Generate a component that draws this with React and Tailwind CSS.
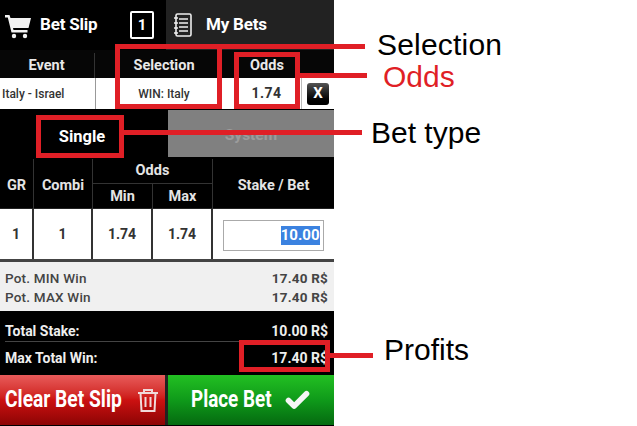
import React from "react";
import { Check } from "lucide-react";

const Box = ({ cls }) => <div className={"absolute border-[5px] border-[#e01f26] " + cls} />;
const Line = ({ cls }) => <div className={"absolute h-[5px] bg-[#e01f26] " + cls} />;

export default function App() {
  return (
    <div className="relative w-[637px] h-[426px] overflow-hidden bg-white font-['Roboto',sans-serif]">
      <div className="w-[334px] h-[426px] flex flex-col bg-black">
        <div className="h-[50px] flex shrink-0">
          <div className="w-[166px] flex items-center bg-black text-white">
            <svg width="28" height="28" viewBox="0 0 28 28" className="ml-[4px]" fill="#f2f2f2">
              <path d="M1 4h4.500l1 3H27l-2.500 10H9l.5 2h14v2.500H7.500L3.800 6.500H1z" />
              <circle cx="10" cy="25" r="2.200" />
              <circle cx="21" cy="25" r="2.200" />
            </svg>
            <span className="ml-[8px] w-[57px] text-[17px] font-bold whitespace-nowrap tracking-[-0.2px]">Bet Slip</span>
            <span className="ml-[33px] w-[24px] h-[28px] flex items-center justify-center border-2 border-white rounded-[2px] text-[15px] font-bold">1</span>
          </div>
          <div className="flex-1 flex items-center bg-[#222222] text-white">
            <svg width="22" height="26" viewBox="0 0 22 26" className="ml-[6px]" fill="none" stroke="#eeeeee" strokeWidth="1.600">
              <rect x="4" y="2" width="15" height="22" rx="1.500" />
              <path d="M7 7h9M7 11h9M7 15h9M7 19h9M2 6h4M2 11h4M2 16h4M2 21h4" />
            </svg>
            <span className="ml-[12px] text-[17px] font-bold whitespace-nowrap tracking-[-0.2px]">My Bets</span>
          </div>
        </div>

        <div className="h-[28px] pt-[3px] flex shrink-0 text-[#e8e8e8] text-[14.5px] font-bold items-center bg-[#060606]">
          <div className="w-[93px] text-center">Event</div>
          <div className="w-[1px] h-full bg-[#333333] mx-[1px]" />
          <div className="w-[136px] text-center">Selection</div>
          <div className="w-[70px] text-center">Odds</div>
        </div>

        <div className="h-[31px] flex shrink-0 bg-white text-[#333333] text-[12px] font-medium items-center">
          <div className="w-[96px] h-full flex items-center pl-[2px] border-r border-[#999999] whitespace-nowrap">Italy - Israel</div>
          <div className="w-[136px] text-center">WIN: Italy</div>
          <div className="w-[70px] h-full flex items-center justify-center border-r border-[#bbbbbb] text-[14px] font-bold tracking-[0.5px]">1.74</div>
          <div className="flex-1 flex items-center justify-center">
            <span className="w-[22px] h-[22px] rounded-[3px] bg-gradient-to-b from-[#555555] to-black text-white text-[15px] font-bold flex items-center justify-center">X</span>
          </div>
        </div>

        <div className="h-[50px] flex shrink-0 bg-black pt-[1px]">
          <div className="w-[168px] flex items-center justify-center text-white text-[16.500px] font-bold pr-[4px] pt-[5px]">Single</div>
          <div className="flex-1 mb-[2px] pt-[5px] bg-[#808080] flex items-center justify-center text-[#9c9c9c] text-[15.500px] font-bold">System</div>
        </div>

        <div className="h-[50px] shrink-0 grid grid-cols-[34px_59px_60px_60px_1fr] grid-rows-[25px_25px] bg-black text-[#e4e4e4] text-[14.500px] font-bold border-b border-[#222222]">
          <div className="row-span-2 flex items-center justify-center border-r border-[#333333] pt-[3px]">GR</div>
          <div className="row-span-2 flex items-center justify-center border-r border-[#333333] pt-[3px]">Combi</div>
          <div className="col-span-2 flex items-center justify-center border-b border-r border-[#333333]">Odds</div>
          <div className="row-span-2 flex items-center justify-center pt-[3px]">Stake / Bet</div>
          <div className="flex items-center justify-center border-r border-[#333333]">Min</div>
          <div className="flex items-center justify-center border-r border-[#333333]">Max</div>
        </div>

        <div className="h-[50px] shrink-0 grid grid-cols-[34px_59px_60px_60px_1fr] bg-white text-[#333333] text-[14px] font-bold">
          <div className="flex items-center justify-center border-r-2 border-[#333333]">1</div>
          <div className="flex items-center justify-center border-r-2 border-[#333333]">1</div>
          <div className="flex items-center justify-center border-r-2 border-[#333333]">1.74</div>
          <div className="flex items-center justify-center border-r-2 border-[#333333]">1.74</div>
          <div className="flex items-center justify-center pt-[2px] pr-[1px]">
            <div className="w-[101px] h-[31px] border border-[#aaaaaa] flex items-center justify-end pr-[3px]">
              <span className="bg-[#3b82e0] text-white text-[15px] leading-[19px] font-bold">10.00</span>
            </div>
          </div>
        </div>

        <div className="h-[3px] shrink-0 bg-[#444444]" />

        <div className="h-[49px] pt-[2px] shrink-0 bg-[#f0f0f0] text-[#444444] text-[13.500px] font-medium flex flex-col justify-center pl-[5px] pr-[6px] leading-[19px] tracking-[0.2px]">
          <div className="flex justify-between"><span>Pot. MIN Win</span><span className="font-bold">17.40 R$</span></div>
          <div className="flex justify-between"><span>Pot. MAX Win</span><span className="font-bold">17.40 R$</span></div>
        </div>

        <div className="h-[64px] shrink-0 bg-black text-[#eeeeee] text-[14px] font-bold pl-[5px] pr-[6px] flex flex-col">
          <div className="h-[31px] pt-[10px] flex justify-between items-center border-b border-[#444444]"><span>Total Stake:</span><span>10.00 R$</span></div>
          <div className="h-[31px] pt-[1px] flex justify-between items-center"><span>Max Total Win:</span><span>17.40 R$</span></div>
        </div>

        <div className="h-[50px] flex shrink-0 gap-[3px] bg-[#222222]">
          <div className="w-[165px] flex items-center bg-gradient-to-b from-[#e85a5a] via-[#cc1111] to-[#8c0505] text-white text-[23px] font-bold pl-[5px] whitespace-nowrap">
            <span className="inline-block w-[116px] origin-left scale-x-[0.835]">Clear Bet Slip</span>
            <svg width="24" height="28" viewBox="0 0 24 26" className="ml-[15px] shrink-0" fill="none" stroke="#f0dada" strokeWidth="2">
              <path d="M2 6h20M8 6V3h8v3M4.500 6l1 18h13l1-18M9.500 10v10M14.500 10v10" />
            </svg>
          </div>
          <div className="flex-1 flex items-center bg-gradient-to-b from-[#22c022] via-[#0f9a1a] to-[#056a10] text-white text-[23px] font-bold pl-[23px] whitespace-nowrap">
            <span className="inline-block w-[82px] origin-left scale-x-[0.82]">Place Bet</span>
            <Check className="ml-[11px]" size={27} strokeWidth={5} color="#f5f5f5" />
          </div>
        </div>
      </div>

      <Box cls="left-[115px] top-[44px] w-[107px] h-[65px]" />
      <Box cls="left-[234px] top-[52px] w-[66px] h-[57px]" />
      <Box cls="left-[36px] top-[115px] w-[88px] h-[43px]" />
      <Box cls="left-[239px] top-[340px] w-[91px] h-[32px]" />
      <Line cls="left-[222px] top-[44px] w-[143px]" />
      <Line cls="left-[300px] top-[73px] w-[67px]" />
      <Line cls="left-[124px] top-[130px] w-[238px]" />
      <Line cls="left-[330px] top-[353px] w-[43px]" />

      <div className="absolute left-[377px] top-[30px] text-[30px] leading-[30px] tracking-[0.2px] text-black font-['Liberation_Sans',sans-serif]">Selection</div>
      <div className="absolute left-[383px] top-[62px] text-[30px] leading-[30px] text-[#e01f26] font-['Liberation_Sans',sans-serif]">Odds</div>
      <div className="absolute left-[371px] top-[118px] text-[30px] leading-[30px] text-black font-['Liberation_Sans',sans-serif]">Bet type</div>
      <div className="absolute left-[384px] top-[335px] text-[30px] leading-[30px] text-black font-['Liberation_Sans',sans-serif]">Profits</div>
    </div>
  );
}
